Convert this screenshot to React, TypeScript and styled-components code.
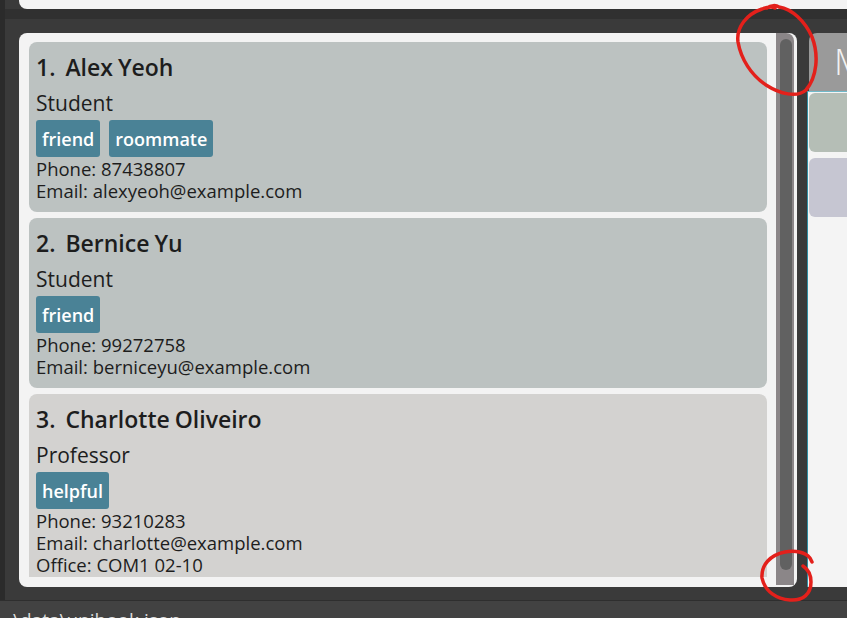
import React from "react";
import styled, { createGlobalStyle } from "styled-components";

const GlobalStyle = createGlobalStyle`
  html, body { margin: 0; padding: 0; background: #3a3a3a; overflow: hidden; }
  * { box-sizing: border-box; }
`;

const FONT = `"Open Sans", "Noto Sans", "DejaVu Sans", sans-serif`;

const Page = styled.div`
  position: relative;
  width: 847px;
  height: 618px;
  overflow: hidden;
  display: flex;
  flex-direction: column;
  background: #3a3a3a;
  font-family: ${FONT};
`;

const Main = styled.div`
  flex: 1;
  display: flex;
  flex-direction: column;
  border-left: 5px solid #2b2b2b;
  padding: 0 0 13px 14px;
  min-height: 0;
`;

const ResultBox = styled.div`
  height: 9px;
  background: #f3f3f3;
  border-bottom-left-radius: 8px;
`;

const Band = styled.div`
  height: 10px;
  margin-left: -14px;
  background: #303030;
`;

const ContentRow = styled.div`
  margin-top: 14px;
  height: 554px;
  display: flex;
  gap: 10px;
`;

const ListPanel = styled.div`
  width: 778px;
  flex: none;
  background: #f3f3f3;
  border-radius: 8px;
  display: flex;
  overflow: hidden;
`;

const ListColumn = styled.div`
  flex: 1;
  display: flex;
  flex-direction: column;
`;

const Viewport = styled.div`
  height: 544px;
  overflow: hidden;
  padding: 9px 9px 0 10px;
  display: flex;
  flex-direction: column;
  gap: 6px;
`;

const Card = styled.div<{ $bg: string }>`
  flex: none;
  background: ${(p) => p.$bg};
  border-radius: 8px;
  padding: 6px 7px 10px 7px;
  color: #1d1d1d;
`;

const Title = styled.div`
  font-size: 23px;
  font-weight: 600;
  line-height: 38px;
  white-space: pre;
  word-spacing: -1px;
`;

const Role = styled.div`
  font-size: 21px;
  line-height: 34px;
`;

const Tags = styled.div`
  display: flex;
  gap: 9px;
  margin-bottom: 1px;
`;

const Tag = styled.span`
  height: 37px;
  padding: 0 6px;
  display: flex;
  align-items: center;
  background: #4a8296;
  color: #ffffff;
  font-size: 18px;
  font-weight: 600;
  border-radius: 3px;
`;

const Detail = styled.div`
  font-size: 18.5px;
  line-height: 22px;
  white-space: nowrap;
`;

const Track = styled.div`
  width: 18px;
  flex: none;
  margin: 0 3px 2px 0;
  background: #8b8688;
  border-top-right-radius: 8px;
  padding: 6px 2px 15px 4px;
  display: flex;
`;

const Thumb = styled.div`
  flex: 1;
  background: #616161;
  border-radius: 6px;
`;

const SidePanel = styled.div`
  flex: 1;
  display: flex;
  flex-direction: column;
  min-width: 0;
`;

const SideHeader = styled.div`
  height: 58px;
  margin-left: 2px;
  background: #9a9a9a;
  border-top-left-radius: 8px;
  color: #f2f2f2;
  font-size: 36px;
  font-weight: 300;
  line-height: 58px;
  padding-left: 25px;
  white-space: nowrap;
  overflow: hidden;
`;

const SideBody = styled.div`
  flex: 1;
  background: #f4f4f4;
  border-left: 1px solid #2f8ea3;
  border-top: 1px solid #6fb9c9;
  padding: 1px 0 0 1px;
  display: flex;
  flex-direction: column;
  gap: 6px;
`;

const SideItem = styled.div<{ $bg: string }>`
  height: 59px;
  background: ${(p) => p.$bg};
  border-radius: 6px 0 0 6px;
`;

const StatusBar = styled.div`
  height: 18px;
  flex: none;
  background: #424242;
  border-top: 1px solid #2e2e2e;
  color: #dcdcdc;
  font-size: 19px;
  line-height: 38px;
  padding-left: 13px;
  overflow: hidden;
  white-space: nowrap;
`;

const Overlay = styled.svg`
  position: absolute;
  left: 0;
  top: 0;
  pointer-events: none;
`;

type Person = {
  id: number;
  name: string;
  role: string;
  tags: string[];
  phone: string;
  email: string;
  office?: string;
  bg: string;
};

const people: Person[] = [
  {
    id: 1,
    name: "Alex Yeoh",
    role: "Student",
    tags: ["friend", "roommate"],
    phone: "87438807",
    email: "alexyeoh@example.com",
    bg: "#bcc2c1",
  },
  {
    id: 2,
    name: "Bernice Yu",
    role: "Student",
    tags: ["friend"],
    phone: "99272758",
    email: "berniceyu@example.com",
    bg: "#bcc2c1",
  },
  {
    id: 3,
    name: "Charlotte Oliveiro",
    role: "Professor",
    tags: ["helpful"],
    phone: "93210283",
    email: "charlotte@example.com",
    office: "COM1 02-10",
    bg: "#d3d2d0",
  },
];

export default function App() {
  return (
    <Page>
      <GlobalStyle />
      <Main>
        <ResultBox />
        <Band />
        <ContentRow>
          <ListPanel>
            <ListColumn>
              <Viewport>
                {people.map((p) => (
                  <Card key={p.id} $bg={p.bg}>
                    <Title>{`${p.id}.  ${p.name}`}</Title>
                    <Role>{p.role}</Role>
                    <Tags>
                      {p.tags.map((t) => (
                        <Tag key={t}>{t}</Tag>
                      ))}
                    </Tags>
                    <Detail>Phone: {p.phone}</Detail>
                    <Detail>Email: {p.email}</Detail>
                    {p.office && <Detail>Office: {p.office}</Detail>}
                  </Card>
                ))}
              </Viewport>
            </ListColumn>
            <Track>
              <Thumb />
            </Track>
          </ListPanel>
          <SidePanel>
            <SideHeader>Modules</SideHeader>
            <SideBody>
              <SideItem $bg="#b5beb6" />
              <SideItem $bg="#c6c6d2" />
            </SideBody>
          </SidePanel>
        </ContentRow>
      </Main>
      <StatusBar>\data\unibook.json</StatusBar>
      <Overlay width="847" height="618" viewBox="0 0 847 618">
        <g fill="none" stroke="#e3201b" strokeWidth="3.5" strokeLinecap="round" strokeLinejoin="round">
          <path d="M767,8 C771,5 776,5 779,7 C792,9 805,21 812,37 C819,55 817,77 806,90 C797,98 780,94 766,85 C751,75 741,59 738,42 C736,27 747,14 762,9 C767,7 772,6 775,8" />
          <path d="M803,566 C809,570 811,576 811,582 C811,594 803,601 790,600 C777,599 765,592 762,578 C761,565 770,555 785,552 C795,550 805,552 810,558 L812,562" />
        </g>
      </Overlay>
    </Page>
  );
}
